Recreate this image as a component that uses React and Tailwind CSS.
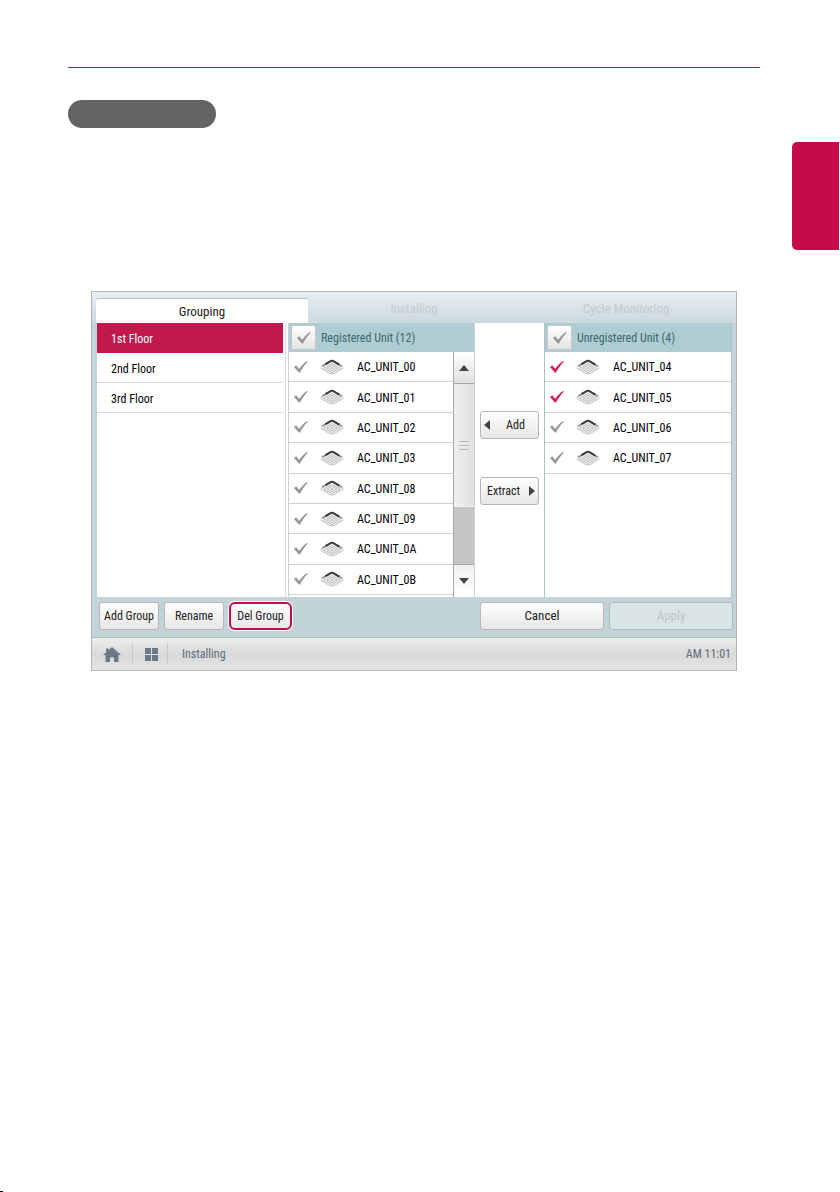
import React, { useState } from 'react';
import clsx from 'clsx';

const GROUPS = ['1st Floor', '2nd Floor', '3rd Floor'];

const REGISTERED = [
  'AC_UNIT_00',
  'AC_UNIT_01',
  'AC_UNIT_02',
  'AC_UNIT_03',
  'AC_UNIT_08',
  'AC_UNIT_09',
  'AC_UNIT_0A',
  'AC_UNIT_0B',
];

const UNREGISTERED = ['AC_UNIT_04', 'AC_UNIT_05', 'AC_UNIT_06', 'AC_UNIT_07'];

const BUTTON = 'rounded-[3px] border border-[#b4b6b8] bg-gradient-to-b from-white to-[#e6e6e7] text-[#222]';

function CheckMark({ className }) {
  return (
    <svg viewBox="0 0 14 12" className={clsx('pointer-events-none h-3 w-3.5', className)} fill="currentColor">
      <path d="M0 6 2.200 4.200 5.200 7.800C7.400 4.600 10 2 13 0l.8.8C10.800 3.800 8.200 7.400 6 11.600H4.800Z" />
    </svg>
  );
}

// Ceiling cassette seen from below
function CassetteIcon() {
  return (
    <svg viewBox="0 0 24 16" className="h-4 w-6" fill="none">
      <path d="M0 8.500 10.500 1.500q1.500-.8 3 0L24 8.500l-9.500 6q-2.500 1.400-5 0Z" fill="#e9e9e9" />
      <path d="M.6 9 9.500 14.500q2.500 1.200 5 0L23.400 9" stroke="#c2c2c2" />
      <path d="M2 7.300 10.800 2q1.200-.7 2.400 0L22 7.300" stroke="#8d8d8d" strokeWidth="1.600" />
      <path d="M5.500 5.200 10.800 2q1.200-.7 2.400 0l6 3.700" stroke="#3a3a3a" strokeWidth="2" />
      <path d="M4 9 12 4.600 20 9l-8 4.400Z" stroke="#b8b8b8" fill="#fafafa" strokeWidth=".8" />
      <path d="M7 9 12 6.300 17 9l-5 2.700Z" stroke="#a8a8a8" strokeWidth=".8" />
      <path d="M9.500 9 12 7.700 14.500 9 12 10.300Z" fill="#c4c4c4" />
    </svg>
  );
}

function Arrow({ d, className }) {
  return (
    <svg viewBox="0 0 10 10" className={className} fill="#444">
      <path d={d} />
    </svg>
  );
}

function PanelHeader({ label }) {
  return (
    <label className="flex h-[29px] items-center bg-[#adcdd2] pl-[2px] text-[#3d6670]">
      <span className="relative grid size-[25px] place-items-center rounded-[2px] border border-[#c3c7c8] bg-gradient-to-b from-white to-[#e4e4e4]">
        <input type="checkbox" className="absolute inset-0 appearance-none" />
        <CheckMark className="text-[#999]" />
      </span>
      <span className="pl-[5px]">{label}</span>
    </label>
  );
}

function UnitRow({ name, checked, onToggle }) {
  return (
    <li className="border-b border-[#cfd2d3]">
      <label className="flex h-full items-center pl-[5px]">
        <span className="relative grid place-items-center">
          <input type="checkbox" checked={checked} onChange={onToggle} className="absolute inset-0 appearance-none" />
          <CheckMark className={checked ? 'text-[#d5215d]' : 'text-[#999]'} />
        </span>
        <span className="pl-3">
          <CassetteIcon />
        </span>
        <span className="pt-px pl-[13px] text-black">{name}</span>
      </label>
    </li>
  );
}

function UnitList({ units, selected, onToggle }) {
  return (
    <ul className="grid h-[243px] flex-1 grid-rows-8">
      {units.map((name) => (
        <UnitRow key={name} name={name} checked={selected.includes(name)} onToggle={() => onToggle(name)} />
      ))}
    </ul>
  );
}

function ScrollBar() {
  return (
    <div className="flex w-[21px] flex-col border-l border-[#a5a8a9] bg-[#c5c5c5]">
      <button aria-label="Scroll up" className="grid h-8 place-items-center border-b border-[#a5a8a9] bg-gradient-to-b from-white to-[#e0e0e0]">
        <Arrow d="M0 8 5 2l5 6Z" className="size-2.5" />
      </button>
      <div className="flex-1">
        <div className="flex h-[123px] flex-col items-center justify-center gap-[3px] border-b border-[#f5f5f5] bg-gradient-to-r from-[#efefef] to-[#e0e0e0]">
          <span className="h-px w-2.5 bg-[#bbb]" />
          <span className="h-px w-2.5 bg-[#bbb]" />
          <span className="h-px w-2.5 bg-[#bbb]" />
        </div>
      </div>
      <button aria-label="Scroll down" className="grid h-[33px] place-items-center border-t border-[#a5a8a9] bg-gradient-to-b from-[#f0f0f0] to-white">
        <Arrow d="M0 2h10L5 8Z" className="size-2.5" />
      </button>
    </div>
  );
}

function Controller() {
  const [group, setGroup] = useState('1st Floor');
  const [selected, setSelected] = useState(['AC_UNIT_04', 'AC_UNIT_05']);

  const toggle = (name) =>
    setSelected((prev) => (prev.includes(name) ? prev.filter((n) => n !== name) : [...prev, name]));

  return (
    <section className="border border-[#b3b7b8] bg-[#c2d4d7] text-xs">
      {/* Tabs */}
      <nav className="grid grid-cols-3 bg-gradient-to-b from-[#e6f0f2] to-[#cbd8dd] px-1 pt-1.5 text-[13px]">
        <button className="h-[25px] rounded-t-[3px] border-t border-[#b9bdc0] bg-white pt-0.5 text-[#222]">Grouping</button>
        <button className="pb-1 text-[#c3cacd]">Installing</button>
        <button className="pb-1 text-[#c3cacd]">Cycle Monitoring</button>
      </nav>

      <div className="mr-1 ml-[5px] grid grid-cols-[191fr_187fr_69fr_188fr] bg-white">
        <ul className="mr-0.5 border-r border-[#d9dddd] pr-0.5">
          {GROUPS.map((name) => (
            <li key={name}>
              <button
                onClick={() => setGroup(name)}
                className={clsx(
                  'h-[30px] w-full border-b pt-0.5 pl-3.5 text-left',
                  name === group ? 'border-[#c2184b] bg-[#c2184b] text-white' : 'border-[#d9dbdc] text-black'
                )}
              >
                {name}
              </button>
            </li>
          ))}
        </ul>

        <div className="border-x border-[#c9d3d5]">
          <PanelHeader label="Registered Unit (12)" />
          <div className="flex h-[245px] items-start">
            <UnitList units={REGISTERED} selected={selected} onToggle={toggle} />
            <div className="flex self-stretch">
              <ScrollBar />
            </div>
          </div>
        </div>

        <div className="flex flex-col gap-[38px] px-[5px] pt-[88px]">
          <button className={clsx(BUTTON, 'flex h-7 items-center pl-0.5')}>
            <Arrow d="M7 0v10L1 5Z" className="size-2.5" />
            <span className="flex-1 text-center">Add</span>
          </button>
          <button className={clsx(BUTTON, 'flex h-7 items-center pr-0.5')}>
            <span className="flex-1 text-center">Extract</span>
            <Arrow d="M3 0v10l6-5Z" className="size-2.5" />
          </button>
        </div>

        <div className="border-x border-[#a9c3c6]">
          <PanelHeader label="Unregistered Unit (4)" />
          <UnitList units={UNREGISTERED} selected={selected} onToggle={toggle} />
        </div>
      </div>

      {/* Actions */}
      <div className="flex h-10 items-center gap-[5px] pr-[3px] pb-0.5 pl-[7px]">
        <button className={clsx(BUTTON, 'h-7 w-[60px]')}>Add Group</button>
        <button className={clsx(BUTTON, 'h-7 w-[60px]')}>Rename</button>
        <button className="h-7 w-[63px] rounded-md border-2 border-[#c60b4c] bg-gradient-to-b from-white to-[#e6e6e7] bg-origin-border text-[#222] ring-1 ring-white">
          Del Group
        </button>
        <div className="ml-auto flex gap-[5px] text-[13px]">
          <button className={clsx(BUTTON, 'h-7 w-[124px]')}>Cancel</button>
          <button disabled className="h-7 w-[124px] rounded-[3px] border border-[#aebcc0] bg-[#d9e4e6] text-[#c0c4c7]">
            Apply
          </button>
        </div>
      </div>

      {/* Status bar */}
      <footer className="flex h-[33px] items-center border-t border-[#b0bbbd] bg-gradient-to-b from-[#eeeeee] via-[#d9d9d9] to-[#e4e4e4] pr-[5px] pl-[11px] text-[#5e6d7b]">
        <a href="#home" aria-label="Home">
          <svg viewBox="0 0 18 15" className="h-[15px] w-[18px]" fill="#6b7988">
            <path d="M9 0 18 8h-2.500v7H11v-4.500H7V15H2.500V8H0L3 5.300V1.500h2.500v1.600Z" />
          </svg>
        </a>
        <span className="ml-[11px] h-5 w-px bg-[#c6c6c6]" />
        <a href="#menu" aria-label="Menu" className="ml-3">
          <svg viewBox="0 0 13 13" className="size-[13px]" fill="#6b7988">
            <path d="M0 0h6v6H0zM7 0h6v6H7zM0 7h6v6H0zM7 7h6v6H7z" />
          </svg>
        </a>
        <span className="ml-[9px] h-5 w-px bg-[#c6c6c6]" />
        <span className="ml-3.5">Installing</span>
        <span className="ml-auto">AM 11:01</span>
      </footer>
    </section>
  );
}

export default function App() {
  return (
    <div className="flex min-h-screen flex-col bg-white font-['Roboto_Condensed','Liberation_Sans_Narrow',Roboto,sans-serif]">
      <div className="flex flex-1 items-start gap-8 pr-px pl-[68px]">
        <main className="flex-1 pt-[67px]">
          <hr className="border-t border-[#b5124a]" />
          <div className="mt-8 h-7 w-[148px] rounded-full bg-[#656263]" />
          <div className="mx-[23px] mt-[163px]">
            <Controller />
          </div>
        </main>
        <aside className="mt-[142px] h-[108px] w-[47px] rounded-l-[5px] bg-[#c60b4c]" />
      </div>
      <div className="h-px w-[3px] bg-black" />
    </div>
  );
}
